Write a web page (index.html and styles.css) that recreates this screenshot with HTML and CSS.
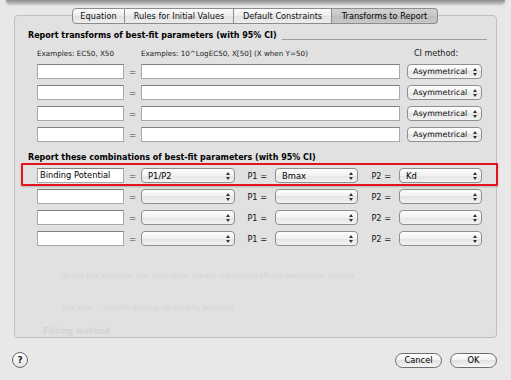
FILE: index.html
```html
<!DOCTYPE html>
<html lang="en">
<head>
    <meta charset="UTF-8">
    <title>Transforms to Report</title>
    <link rel="stylesheet" href="styles.css">
</head>
<body>
    <div class="window-edge"></div>
    <div class="tab-view">
        <div class="tabs">
            <div class="tab tab-eq">Equation</div>
            <div class="tab tab-rules">Rules for Initial Values</div>
            <div class="tab tab-constraints">Default Constraints</div>
            <div class="tab tab-transforms selected">Transforms to Report</div>
        </div>
        <div class="panel">
            <div class="section-title"><span>Report transforms of best-fit parameters (with 95% CI)</span><span class="rule"></span></div>
            <div class="examples">
                <span class="ex-left">Examples: EC50, X50</span>
                <span class="ex-right">Examples: 10^LogEC50, X[50] (X when Y=50)</span>
                <span class="ci-label">CI method:</span>
            </div>
            <div class="rows">
                <div class="row">
                    <div class="field name"></div><span class="eq">=</span><div class="field expr"></div>
                    <div class="popup ci"><span>Asymmetrical</span><span class="arrows"></span></div>
                </div>
                <div class="row">
                    <div class="field name"></div><span class="eq">=</span><div class="field expr"></div>
                    <div class="popup ci"><span>Asymmetrical</span><span class="arrows"></span></div>
                </div>
                <div class="row">
                    <div class="field name"></div><span class="eq">=</span><div class="field expr"></div>
                    <div class="popup ci"><span>Asymmetrical</span><span class="arrows"></span></div>
                </div>
                <div class="row">
                    <div class="field name"></div><span class="eq">=</span><div class="field expr"></div>
                    <div class="popup ci"><span>Asymmetrical</span><span class="arrows"></span></div>
                </div>
            </div>

            <div class="section-title second"><span>Report these combinations of best-fit parameters (with 95% CI)</span></div>
            <div class="rows">
                <div class="row highlight">
                    <div class="field name">Binding Potential</div><span class="eq">=</span>
                    <div class="popup combo"><span>P1/P2</span><span class="arrows"></span></div>
                    <span class="plabel p1">P1 =</span>
                    <div class="popup param"><span>Bmax</span><span class="arrows"></span></div>
                    <span class="plabel p2">P2 =</span>
                    <div class="popup param"><span>Kd</span><span class="arrows"></span></div>
                </div>
                <div class="row">
                    <div class="field name"></div><span class="eq">=</span>
                    <div class="popup combo"><span></span><span class="arrows"></span></div>
                    <span class="plabel p1">P1 =</span>
                    <div class="popup param"><span></span><span class="arrows"></span></div>
                    <span class="plabel p2">P2 =</span>
                    <div class="popup param"><span></span><span class="arrows"></span></div>
                </div>
                <div class="row">
                    <div class="field name"></div><span class="eq">=</span>
                    <div class="popup combo"><span></span><span class="arrows"></span></div>
                    <span class="plabel p1">P1 =</span>
                    <div class="popup param"><span></span><span class="arrows"></span></div>
                    <span class="plabel p2">P2 =</span>
                    <div class="popup param"><span></span><span class="arrows"></span></div>
                </div>
                <div class="row">
                    <div class="field name"></div><span class="eq">=</span>
                    <div class="popup combo"><span></span><span class="arrows"></span></div>
                    <span class="plabel p1">P1 =</span>
                    <div class="popup param"><span></span><span class="arrows"></span></div>
                    <span class="plabel p2">P2 =</span>
                    <div class="popup param"><span></span><span class="arrows"></span></div>
                </div>
            </div>

            <!-- faint text of the dialog underneath, showing through -->
            <div class="ghost">
                <p class="ghost-line first">To use this equation, you must have already subtracted off any nonspecific binding.</p>
                <p class="ghost-line">Use with ... Specific binding, Fit binding potential</p>
                <p class="ghost-line heading">Fitting method</p>
            </div>
        </div>
    </div>
    <div class="footer">
        <div class="help">?</div>
        <div class="buttons">
            <div class="button">Cancel</div>
            <div class="button">OK</div>
        </div>
    </div>
</body>
</html>
```
FILE: styles.css
```css
body {
    margin: 0;
    width: 511px;
    height: 380px;
    overflow: hidden;
    background-color: #e8e8e8;
    font-family: "DejaVu Sans", sans-serif;
    color: #000;
}
.window-edge {
    height: 3px;
    margin: 0 6px;
    background: linear-gradient(#8a8a8a, #b4b4b4);
    border-radius: 0 0 3px 3px;
    box-shadow: 0 1px 3px rgba(0,0,0,0.35);
}
.tab-view {
    padding: 5px 14px 0 14px;
}
.tabs {
    display: flex;
    justify-content: center;
    position: relative;
    z-index: 1;
    margin-bottom: -9px;
    padding-right: 1px;
}
.tab {
    box-sizing: border-box;
    height: 16px;
    line-height: 14px;
    font-size: 8.2px;
    text-align: center;
    border: 1px solid #8c8c8c;
    border-left: none;
    background: linear-gradient(#fbfbfb, #ececec 50%, #e2e2e2 50%, #ededed);
    color: #111;
}
.tab-eq {
    width: 53px;
    border-left: 1px solid #8c8c8c;
    border-radius: 4px 0 0 4px;
}
.tab-rules {
    width: 109px;
}
.tab-constraints {
    width: 98px;
}
.tab-transforms {
    width: 106px;
    border-radius: 0 4px 4px 0;
}
.tab.selected {
    background: linear-gradient(#d2d2d2, #c6c6c6 50%, #bcbcbc 50%, #c8c8c8);
    color: #000;
}
.panel {
    box-sizing: border-box;
    height: 323px;
    border: 1px solid #bfbfbf;
    border-radius: 4px;
    background-color: #e1e1e1;
    padding: 14px 9px 0 13px;
}
.section-title {
    display: flex;
    height: 12px;
    line-height: 12px;
    font-size: 8px;
    font-weight: bold;
    white-space: nowrap;
}
.section-title .rule {
    flex: 1;
    align-self: flex-end;
    margin: 0 0 2px 5px;
    border-top: 1px solid #9e9e9e;
}
.section-title.second {
    margin-top: 10px;
}
.examples {
    display: flex;
    align-items: baseline;
    margin-top: 6px;
    padding-left: 9px;
    height: 12px;
    line-height: 12px;
    font-size: 7.2px;
    color: #1a1a1a;
    white-space: nowrap;
}
.ex-left {
    width: 104px;
}
.ex-right {
    flex: 1;
}
.ci-label {
    width: 73px;
    font-size: 8px;
}
.rows {
    display: flex;
    flex-direction: column;
    gap: 6px;
    margin-top: 4px;
    padding-left: 9px;
}
.row {
    display: flex;
    align-items: center;
    height: 15px;
}
.highlight {
    position: relative;
}
/* red annotation box drawn around the first combination */
.highlight::before {
    content: "";
    position: absolute;
    top: -5px;
    left: -16px;
    right: -11px;
    bottom: -3px;
    border: 2px solid #e3141c;
    border-radius: 1px;
    box-shadow: 0 1px 2px rgba(0,0,0,0.2);
}
.field {
    box-sizing: border-box;
    height: 15px;
    background-color: #fff;
    border: 1px solid #a9a9a9;
    border-top-color: #808080;
    font-size: 8.3px;
    line-height: 13px;
    padding-left: 2px;
    white-space: nowrap;
    overflow: hidden;
}
.field.name {
    width: 87px;
}
.field.expr {
    width: 259px;
}
.eq {
    width: 17px;
    text-align: center;
    font-size: 9px;
    color: #444;
}
.popup {
    box-sizing: border-box;
    height: 15px;
    display: flex;
    align-items: center;
    justify-content: space-between;
    padding: 0 4px 0 6px;
    border: 1px solid #8f8f8f;
    border-radius: 4px;
    background: linear-gradient(#fefefe, #f1f1f1 50%, #e4e4e4 50%, #f3f3f3);
    font-size: 8.4px;
    white-space: nowrap;
}
.popup.ci {
    width: 75px;
    margin-left: 7px;
    padding-left: 5px;
    font-size: 7.9px;
    color: #111;
}
.popup.combo {
    width: 94px;
}
.popup.param {
    width: 83px;
}
.arrows {
    display: flex;
    flex-direction: column;
    gap: 2px;
}
.arrows::before {
    content: "";
    border-left: 2px solid transparent;
    border-right: 2px solid transparent;
    border-bottom: 3px solid #333;
}
.arrows::after {
    content: "";
    border-left: 2px solid transparent;
    border-right: 2px solid transparent;
    border-top: 3px solid #333;
}
.plabel {
    box-sizing: border-box;
    text-align: right;
    padding-right: 8px;
    font-size: 8.2px;
    color: #111;
    white-space: nowrap;
}
.plabel.p1 {
    width: 40px;
}
.plabel.p2 {
    width: 41px;
}
.ghost {
    padding-left: 9px;
    color: #d4d4d4;
    font-size: 7px;
    line-height: 10px;
}
.ghost-line {
    margin: 22px 0 0 0;
    padding-left: 25px;
    white-space: nowrap;
}
.ghost-line.first {
    margin-top: 25px;
}
.ghost-line.heading {
    margin-top: 14px;
    padding-left: 6px;
    font-weight: bold;
    font-size: 8px;
}
.footer {
    display: flex;
    justify-content: space-between;
    align-items: center;
    padding: 14px 14px 0 12px;
}
.help {
    box-sizing: border-box;
    width: 16px;
    height: 16px;
    border-radius: 50%;
    border: 1px solid #6a6a6a;
    background: linear-gradient(#ffffff, #e4e4e4);
    text-align: center;
    line-height: 14px;
    font-size: 9px;
    font-weight: bold;
    color: #222;
}
.buttons {
    display: flex;
    gap: 8px;
}
.button {
    box-sizing: border-box;
    width: 47px;
    height: 15px;
    border: 1px solid #6e6e6e;
    border-radius: 8px;
    background: linear-gradient(#ffffff, #f0f0f0 50%, #e2e2e2 50%, #f6f6f6);
    text-align: center;
    line-height: 13px;
    font-size: 8.3px;
    color: #000;
}
```
